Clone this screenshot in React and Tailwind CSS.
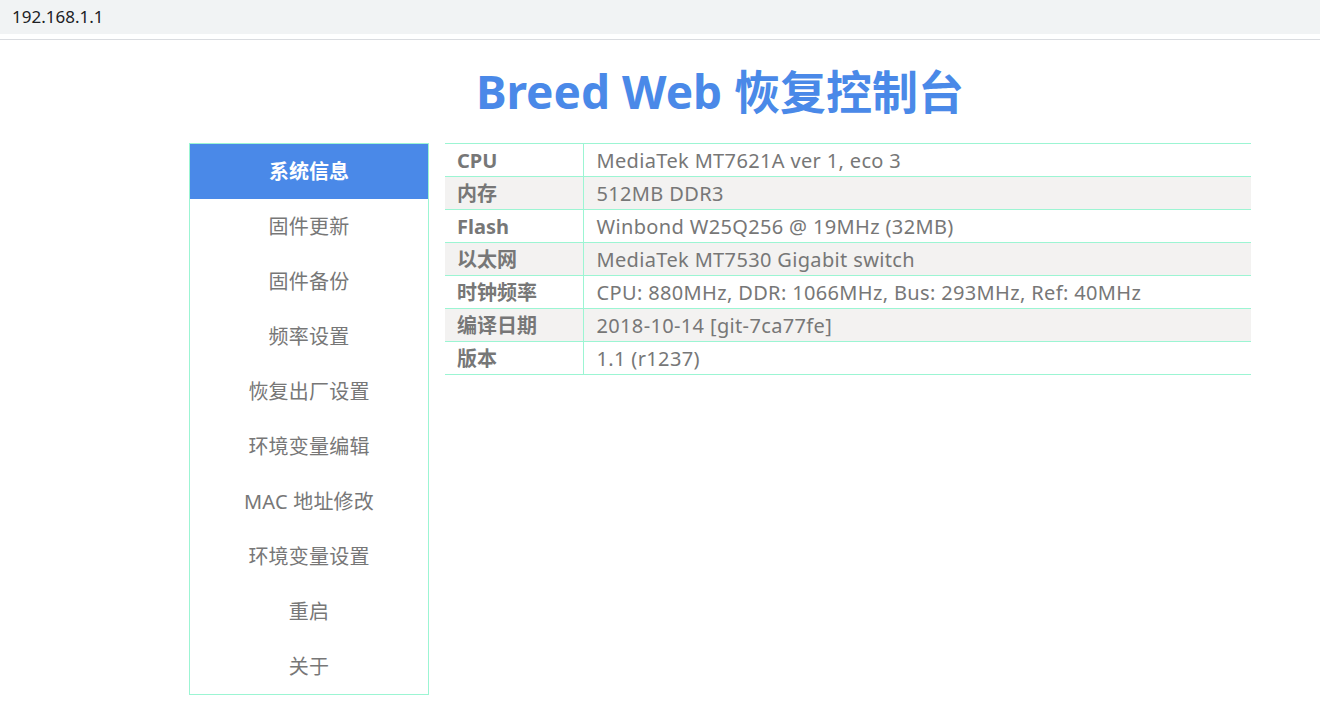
import React from 'react';

const menu = [
  '系统信息',
  '固件更新',
  '固件备份',
  '频率设置',
  '恢复出厂设置',
  '环境变量编辑',
  'MAC 地址修改',
  '环境变量设置',
  '重启',
  '关于',
];

const rows = [
  ['CPU', 'MediaTek MT7621A ver 1, eco 3'],
  ['内存', '512MB DDR3'],
  ['Flash', 'Winbond W25Q256 @ 19MHz (32MB)'],
  ['以太网', 'MediaTek MT7530 Gigabit switch'],
  ['时钟频率', 'CPU: 880MHz, DDR: 1066MHz, Bus: 293MHz, Ref: 40MHz'],
  ['编译日期', '2018-10-14 [git-7ca77fe]'],
  ['版本', '1.1 (r1237)'],
];

function App() {
  return (
    <div className="min-h-screen bg-white font-['Noto_Sans','Noto_Sans_CJK_SC',sans-serif]">
      <div className="h-[34px] bg-[#f1f3f4] flex items-center px-3 pb-[1px] text-[17px] text-[#202124]">
        192.168.1.1
      </div>
      <div className="h-[5px]" />
      <div className="h-px bg-[#dadce0]" />

      <div className="ml-[189px] w-[1062px]">
        <h1 className="h-[103px] flex items-center justify-center text-[46px] font-bold text-[#4a89e8] leading-none pb-[1px]">
          Breed Web 恢复控制台
        </h1>

        <div className="flex gap-4 items-start">
          <ul className="w-[240px] border border-[#9cf5d3]">
            {menu.map((item, i) => (
              <li
                key={item}
                className={
                  i === 0
                    ? 'h-[55px] flex items-center justify-center bg-[#4a89e8] text-white font-bold text-[20px] pt-[1px]'
                    : 'h-[55px] flex items-center justify-center text-[#777] text-[20px] tracking-[0.2px] pt-[1px]'
                }
              >
                {item}
              </li>
            ))}
          </ul>

          <table className="w-[806px] border-collapse text-[20px] text-[#777]">
            <tbody>
              {rows.map(([k, v], i) => (
                <tr
                  key={k}
                  className={i % 2 === 1 ? 'bg-[#f3f2f1] h-[33px]' : 'bg-white h-[33px]'}
                >
                  <td className="w-[138px] border-y border-r border-[#9cf5d3] pl-[12px] font-bold leading-none p-0 pt-[1px]">
                    {k}
                  </td>
                  <td className="border-y border-[#9cf5d3] pl-[13px] leading-none p-0 pt-[1px] tracking-[0.35px]">
                    {v}
                  </td>
                </tr>
              ))}
            </tbody>
          </table>
        </div>
      </div>
    </div>
  );
}

export default App;
